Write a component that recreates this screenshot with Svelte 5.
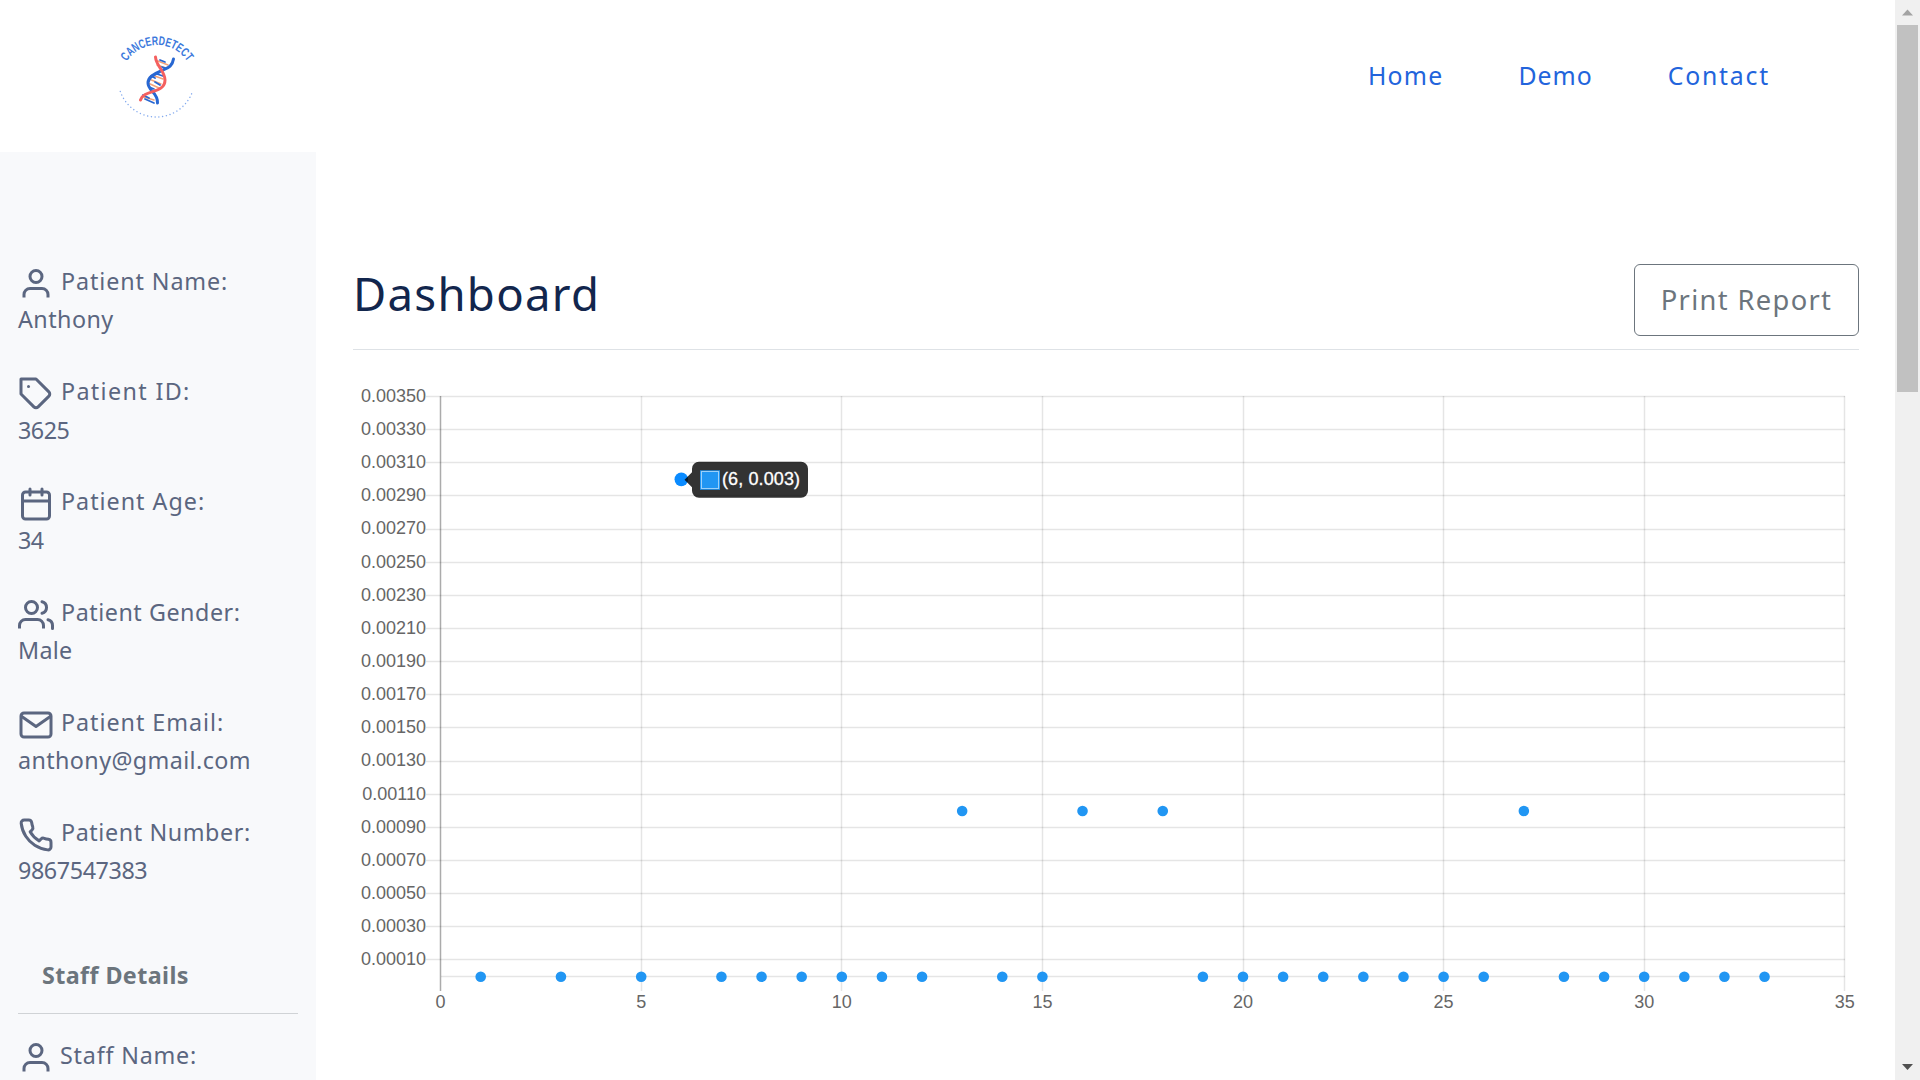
<script>
  // ls / vs: tracking of the label and of the value, in pixels
  const patient = [
    { icon: 'user', label: 'Patient Name:', ls: 0.9, value: 'Anthony', vs: 0.45 },
    { icon: 'tag', label: 'Patient ID:', ls: 1.35, value: '3625', vs: -0.5 },
    { icon: 'calendar', label: 'Patient Age:', ls: 1, value: '34', vs: -0.5 },
    { icon: 'users', label: 'Patient Gender:', ls: 0.54, value: 'Male', vs: 0.3 },
    { icon: 'mail', label: 'Patient Email:', ls: 0.96, value: 'anthony@gmail.com', vs: 0.4 },
    { icon: 'phone', label: 'Patient Number:', ls: 0.6, value: '9867547383', vs: -0.4 }
  ];

  // Chart scales
  const X0 = 87.6, XSTEP = 40.12, Y0 = 593.5, TOP = 13.5;
  const px = (x) => X0 + x * XSTEP;
  const py = (v) => Y0 - (v / 0.0035) * (Y0 - TOP);
  const snap = (v) => Math.floor(v) + 0.5;
  const yTicks = Array.from({ length: 18 }, (_, i) => (35 - 2 * i) / 10000);
  const xTicks = [0, 5, 10, 15, 20, 25, 30, 35];
  const points = [
    ...[1, 3, 5, 7, 8, 9, 10, 11, 12, 14, 15, 19, 20, 21, 22, 23, 24, 25, 26, 28, 29, 30, 31, 32, 33].map((x) => [x, 0]),
    ...[13, 16, 18, 27].map((x) => [x, 0.001])
  ];
</script>

{#snippet icon(name)}
  <svg class="icon" viewBox="0 0 24 24">
    {#if name === 'user'}
      <path d="M20 21v-2a4 4 0 0 0-4-4H8a4 4 0 0 0-4 4v2" /><circle cx="12" cy="7" r="4" />
    {:else if name === 'tag'}
      <path d="M20.59 13.41l-7.17 7.17a2 2 0 0 1-2.83 0L2 12V2h10l8.59 8.59a2 2 0 0 1 0 2.82z" /><path d="M7 7h.01" stroke-linecap="round" />
    {:else if name === 'calendar'}
      <rect x="3" y="4" width="18" height="18" rx="2" /><path d="M16 2v4M8 2v4M3 10h18" stroke-linecap="round" />
    {:else if name === 'users'}
      <path d="M17 21v-2a4 4 0 0 0-4-4H5a4 4 0 0 0-4 4v2" /><circle cx="9" cy="7" r="4" /><path d="M23 21v-2a4 4 0 0 0-3-3.87M16 3.13a4 4 0 0 1 0 7.75" stroke-linecap="round" />
    {:else if name === 'mail'}
      <path d="M4 4h16c1.1 0 2 .9 2 2v12c0 1.1-.9 2-2 2H4c-1.1 0-2-.9-2-2V6c0-1.1.9-2 2-2z" /><path d="M22 6l-10 7L2 6" />
    {:else}
      <path d="M22 16.92v3a2 2 0 0 1-2.18 2 19.79 19.79 0 0 1-8.63-3.07 19.5 19.5 0 0 1-6-6 19.79 19.79 0 0 1-3.07-8.67A2 2 0 0 1 4.11 2h3a2 2 0 0 1 2 1.72 12.84 12.84 0 0 0 .7 2.81 2 2 0 0 1-.45 2.11L8.09 9.91a16 16 0 0 0 6 6l1.27-1.27a2 2 0 0 1 2.11-.45 12.84 12.84 0 0 0 2.81.7A2 2 0 0 1 22 16.92z" />
    {/if}
  </svg>
{/snippet}

<div class="page">
  <div class="content">
    <header>
      <svg class="logo" viewBox="0 0 90 100" width="90" height="100">
        <defs><path id="arc" d="M10 55A36 36 0 0 1 82 55" /></defs>
        <text class="brand"><textPath href="#arc" startOffset="50%" text-anchor="middle" textLength="72" lengthAdjust="spacingAndGlyphs">CANCERDETECT</textPath></text>
        <path d="M9.3 65.5A38.3 38.3 0 0 0 81.5 65.5" fill="none" stroke="#82a9ee" stroke-width="1.4" stroke-linecap="round" stroke-dasharray="0.1 3.7" />
        <g fill="none" stroke-linecap="round">
          <path d="M47 35l10 4M46 39l9 3M41 49l11 4M38 53l12 5M37 57l11 5M33 71l10 3" stroke="#f3a27a" stroke-width="1.4" />
          <path d="M49 34l5 2M51 41l3 1M46 48l6 2M40 50l4 2M44 56l5 3M38 61l5 2M32 69l6 3M34 73l9 4" stroke="#2867d2" stroke-width="1.8" />
          <path d="M62.5 33C61 42 55 42 49 45.500C43 48 37 51 37 57C37 65 47 66 46.500 77" stroke="#2867d2" stroke-width="3" />
          <path d="M44.500 31C45 40 54 45 54 54C54 68 33 63 29.500 74" stroke="#f4605f" stroke-width="3" />
        </g>
      </svg>
      <nav><a class="home">Home</a><a class="demo">Demo</a><a class="contact">Contact</a></nav>
    </header>
    <div class="body">
      <aside>
        {#each patient as p}
          <div class="item">
            <div class="line">{@render icon(p.icon)}<span class="label" style:letter-spacing="{p.ls}px">{p.label}</span></div>
            <div class="line"><span style:letter-spacing="{p.vs}px">{p.value}</span></div>
          </div>
        {/each}
        <h6>Staff Details</h6>
        <div class="line staff">{@render icon('user')}<span class="label">Staff Name:</span></div>
      </aside>
      <main>
        <div class="title">
          <h1>Dashboard</h1>
          <button>Print Report</button>
        </div>
        <svg class="chart" width="1507" height="640">
          {#each yTicks as t}
            <line x1="73" x2="1492" y1={snap(py(t))} y2={snap(py(t))} />
            <text x="73" y={py(t) + 5.3} text-anchor="end">{t.toFixed(5)}</text>
          {/each}
          <line x1="88" x2="1492" y1={snap(Y0)} y2={snap(Y0)} />
          {#each xTicks as t}
            <line class:axis={t === 0} x1={snap(px(t))} x2={snap(px(t))} y1="13" y2="608" />
            <text x={px(t)} y="624.5" text-anchor="middle">{t}</text>
          {/each}
          {#each points as [x, y]}
            <circle cx={px(x)} cy={py(y) + 0.2} r="5.3" />
          {/each}
          <circle class="active" cx={px(6)} cy={py(0.003)} r="6.8" />
          <g class="tip" transform="translate(0 0.800)">
            <path d="M331.5 96L339 88.500V85a7 7 0 0 1 7-7H448a7 7 0 0 1 7 7V107a7 7 0 0 1-7 7H346a7 7 0 0 1-7-7V103.500z" />
            <rect class="edge" x="347" y="86.500" width="20" height="19.500" />
            <rect class="swatch" x="348.5" y="87.700" width="17" height="17" />
            <text x="369" y="101.200" textLength="78">(6, 0.003)</text>
          </g>
        </svg>
      </main>
    </div>
  </div>
  <div class="scrollbar">
    <svg width="24" height="24" viewBox="0 0 24 24"><path d="M6 15.5h11l-5.5-6z" fill="#a3a3a3" /></svg>
    <div class="thumb"></div>
    <svg class="down" width="24" height="24" viewBox="0 0 24 24"><path d="M6 8h11l-5.5 6z" fill="#505050" /></svg>
  </div>
</div>

<style>
  :global(body) { margin: 0; overflow: hidden; background: #fff; }
  .page { display: flex; width: 1920px; height: 1080px; overflow: hidden; font-family: "Noto Sans", sans-serif; color: #5b6680; }
  .content { width: 1895px; display: flex; flex-direction: column; }
  header { height: 152px; flex: none; display: flex; justify-content: space-between; align-items: center; padding: 0 125px 0 111px; box-sizing: border-box; }
  .logo { display: block; }
  .brand { font: bold 12.5px "Liberation Sans", sans-serif; fill: #3b78dc; }
  nav { display: flex; font-size: 24.8px; color: #2264dc; gap: 75px; padding-bottom: 2px; }
  .home { letter-spacing: 1.2px; }
  .demo { letter-spacing: 1px; }
  .contact { letter-spacing: 1.8px; }
  .body { display: flex; flex: 1; min-height: 0; }
  aside { width: 316px; box-sizing: border-box; background: #f8f9fb; padding: 110px 18px 0; flex: none; overflow: hidden; }
  .item { height: 110.2px; }
  .line { display: flex; height: 38.4px; line-height: 38.4px; font-size: 23.3px; letter-spacing: 0.8px; white-space: nowrap; }
  .icon { width: 36px; height: 36px; margin-top: 4px; flex: none; fill: none; stroke: #5b6680; stroke-width: 2; stroke-linecap: butt; stroke-linejoin: round; }
  .label { margin-left: 7px; }
  .staff .label { margin-left: 6px; }
  h6 { margin: 32px 0 22px; height: 58px; line-height: 40px; padding-left: 24px; font-size: 23.3px; letter-spacing: 0.4px; color: #6c757d; border-bottom: 1px solid #d0d3d6; }
  main { flex: 1; padding: 112px 36px 0 37px; overflow: hidden; }
  .title { display: flex; justify-content: space-between; height: 85px; border-bottom: 1px solid #dee2e6; }
  h1 { margin: 0; font-size: 45.5px; line-height: 58px; font-weight: 400; color: #12264d; letter-spacing: 1.3px; }
  button { width: 225px; height: 72px; background: #fff; border: 1px solid #6c757d; border-radius: 6px; font: 27.3px "Noto Sans", sans-serif; letter-spacing: 1.35px; color: #6c757d; padding: 0 0 2px; white-space: nowrap; }
  .chart { display: block; margin-top: 33px; font: 18px "Liberation Sans", sans-serif; }
  .chart line { stroke: #000; stroke-opacity: 0.1; stroke-width: 1.5; }
  .chart line.axis { stroke-opacity: 0.33; }
  .chart text { fill: #666; }
  .chart circle { fill: #2196f3; }
  .chart circle.active { fill: #0a8bff; }
  .tip path { fill: #000; fill-opacity: 0.8; }
  .tip .edge { fill: #2196f3; }
  .tip .swatch { fill: #2196f3; stroke: #9bd0fa; stroke-width: 1; }
  .tip text { fill: #fff; stroke: #fff; stroke-width: 0.3; }
  .scrollbar { width: 25px; background: #f0f0f0; display: flex; flex-direction: column; align-items: center; }
  .scrollbar svg { flex: none; display: block; }
  .thumb { width: 21px; height: 367px; background: #c1c1c1; margin-top: 1px; }
  .down { margin-top: auto; }
</style>
